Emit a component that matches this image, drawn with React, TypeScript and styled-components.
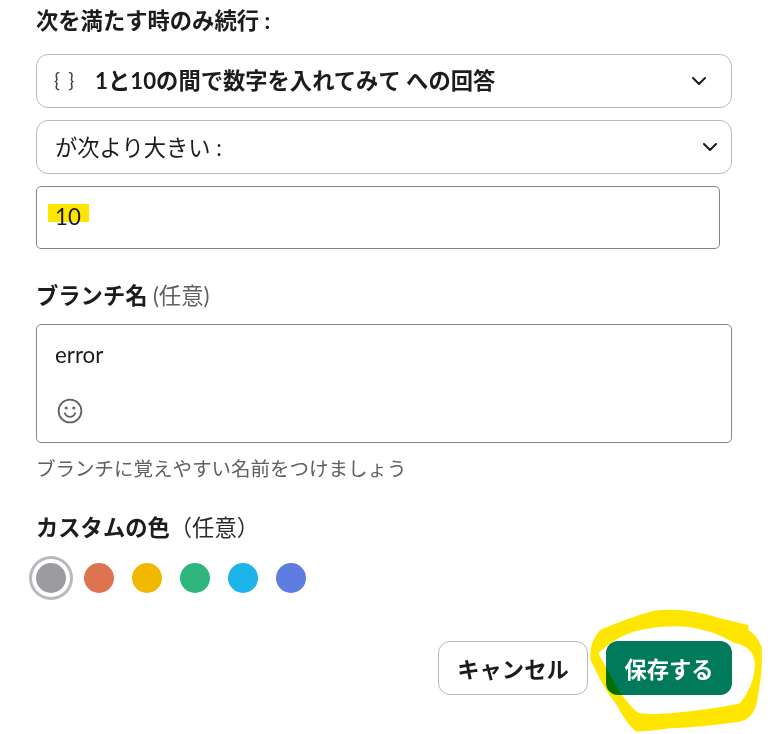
import styled, { createGlobalStyle } from 'styled-components';

const GlobalStyle = createGlobalStyle`
	html,
	body {
		margin: 0;
		padding: 0;
		background: #fff;
	}
	* {
		box-sizing: border-box;
	}
`;

const Page = styled.div`
	position: relative;
	width: 771px;
	height: 734px;
	overflow: hidden;
	padding: 7px 39px 0 36px;
	font-family: Lato, 'Noto Sans CJK JP', sans-serif;
	font-size: 22.3px;
	color: #1d1c1d;
`;

const Label = styled.div<{ $gap: number }>`
	font-weight: 700;
	line-height: 28px;
	margin-bottom: ${({ $gap }) => $gap}px;
`;

const Optional = styled.span`
	font-weight: 400;
	color: #616061;
`;

const ColorOptional = styled.span`
	font-weight: 400;
	color: #2c2a2c;
`;

const Select = styled.div<{ $bold?: boolean; $chevronRight: number }>`
	display: flex;
	align-items: center;
	justify-content: space-between;
	height: 54px;
	margin-bottom: 12px;
	padding: 0 ${({ $chevronRight }) => $chevronRight}px 0 ${({ $bold }) => ($bold ? 17 : 18)}px;
	border: 1px solid #b9b9ba;
	border-radius: 12px;
	font-weight: ${({ $bold }) => ($bold ? 700 : 400)};
`;

const SelectValue = styled.span<{ $lift: number }>`
	display: flex;
	align-items: center;
	padding-bottom: ${({ $lift }) => $lift}px;
`;

const Braces = styled.span`
	width: 41px;
	font-size: 20px;
	font-weight: 400;
	letter-spacing: 1.5px;
	color: #454245;
`;

const Chevron = styled.svg`
	width: 14px;
	height: 8px;
	fill: none;
	stroke: #1d1c1d;
	stroke-width: 2;
	stroke-linecap: round;
	stroke-linejoin: round;
`;

const ValueInput = styled.div`
	position: relative;
	width: 684px;
	height: 63px;
	padding: 16px 18px;
	border: 1px solid #868686;
	border-radius: 5px;
	line-height: 28px;
`;

const Marker = styled.span`
	position: absolute;
	left: 11px;
	top: 17px;
	width: 41px;
	height: 18px;
	background: #ffe600;
	mix-blend-mode: multiply;
`;

const BranchSection = styled.section`
	margin-top: 33px;
`;

const NameBox = styled.div`
	display: flex;
	flex-direction: column;
	height: 119px;
	padding: 16px 18px 0;
	border: 1px solid #868686;
	border-radius: 5px;
	line-height: 28px;
`;

const EmojiButton = styled.svg`
	width: 26px;
	height: 26px;
	margin: 29px 0 0 2px;
	fill: none;
	stroke: #616061;
	stroke-width: 1.8;
	stroke-linecap: round;
`;

const Hint = styled.div`
	margin-top: 12px;
	font-size: 19.5px;
	line-height: 28px;
	color: #616061;
`;

const ColorSection = styled.section`
	margin-top: 31px;
`;

const Swatches = styled.div`
	display: flex;
	align-items: center;
	gap: 18px;
	height: 44px;
`;

const Swatch = styled.span<{ $color: string; $selected?: boolean }>`
	flex: none;
	width: 30px;
	height: 30px;
	border-radius: 50%;
	background: ${({ $color }) => $color};
	${({ $selected }) =>
		$selected &&
		`
		box-shadow: 0 0 0 4px #fff, 0 0 0 7px #b9b9bd;
		`}
`;

const Actions = styled.div`
	display: flex;
	justify-content: flex-end;
	gap: 18px;
	margin-top: 41px;
`;

const Button = styled.button<{ $primary?: boolean }>`
	height: 54px;
	padding: 0 0 1px;
	width: ${({ $primary }) => ($primary ? 126 : 150)}px;
	border: ${({ $primary }) => ($primary ? 'none' : '1px solid #b9b9ba')};
	border-radius: 12px;
	background: ${({ $primary }) => ($primary ? '#007a5a' : '#fff')};
	color: ${({ $primary }) => ($primary ? '#fff' : '#1d1c1d')};
	font-family: inherit;
	font-size: 22.3px;
	font-weight: 700;
`;

const Scribble = styled.svg`
	position: absolute;
	left: 420px;
	top: 590px;
	width: 351px;
	height: 144px;
	fill: #ffe600;
	fill-rule: evenodd;
	mix-blend-mode: multiply;
	pointer-events: none;
`;

const COLORS = ['#9c9b9f', '#dd744f', '#f2b800', '#2fb67c', '#1cb4ea', '#5f7ce0'];

// the marker stroke, traced as an outer and an inner outline
const SCRIBBLE_PATH =
	'M985 105L985 120Q1010 135 1025 170Q1030 240 1010 340Q1000 385 960 395Q850 410 750 415Q680 425 650 425Q625 410 590 345Q550 295 512 210Q505 160 540 120Q620 85 700 62Q800 50 900 85Z' +
	'M535 190Q580 145 640 125Q720 105 800 110Q880 120 945 160Q1005 170 1005 230Q1000 290 960 340Q880 358 750 370Q690 375 660 370Q635 360 590 290Z';

function ChevronIcon() {
	return (
		<Chevron viewBox="0 0 14 8">
			<path d="M1 1l6 6 6-6" />
		</Chevron>
	);
}

export default function App() {
	return (
		<Page>
			<GlobalStyle />
			<Label $gap={19}>次を満たす時のみ続行 :</Label>
			<Select $bold $chevronRight={25}>
				<SelectValue $lift={4}>
					<Braces>{'{ }'}</Braces>1と10の間で数字を入れてみて への回答
				</SelectValue>
				<ChevronIcon />
			</Select>
			<Select $chevronRight={14}>
				<SelectValue $lift={2}>が次より大きい :</SelectValue>
				<ChevronIcon />
			</Select>
			<ValueInput>
				<Marker />
				10
			</ValueInput>

			<BranchSection>
				<Label $gap={14}>
					ブランチ名 <Optional>(任意)</Optional>
				</Label>
				<NameBox>
					error
					<EmojiButton viewBox="0 0 26 26">
						<circle cx="13" cy="13" r="11.4" />
						<path d="M7.8 15.2c1.2 2.6 3 3.7 5.2 3.7s4-1.1 5.2-3.7" />
						<circle cx="9.2" cy="10" r="0.7" />
						<circle cx="16.8" cy="10" r="0.7" />
					</EmojiButton>
				</NameBox>
				<Hint>ブランチに覚えやすい名前をつけましょう</Hint>
			</BranchSection>

			<ColorSection>
				<Label $gap={14}>
					カスタムの色<ColorOptional>（任意）</ColorOptional>
				</Label>
				<Swatches>
					{COLORS.map((color, i) => (
						<Swatch key={color} $color={color} $selected={i === 0} />
					))}
				</Swatches>
			</ColorSection>

			<Actions>
				<Button>キャンセル</Button>
				<Button $primary>保存する</Button>
			</Actions>

			<Scribble viewBox="0 0 1053 432">
				<path d={SCRIBBLE_PATH} />
			</Scribble>
		</Page>
	);
}
